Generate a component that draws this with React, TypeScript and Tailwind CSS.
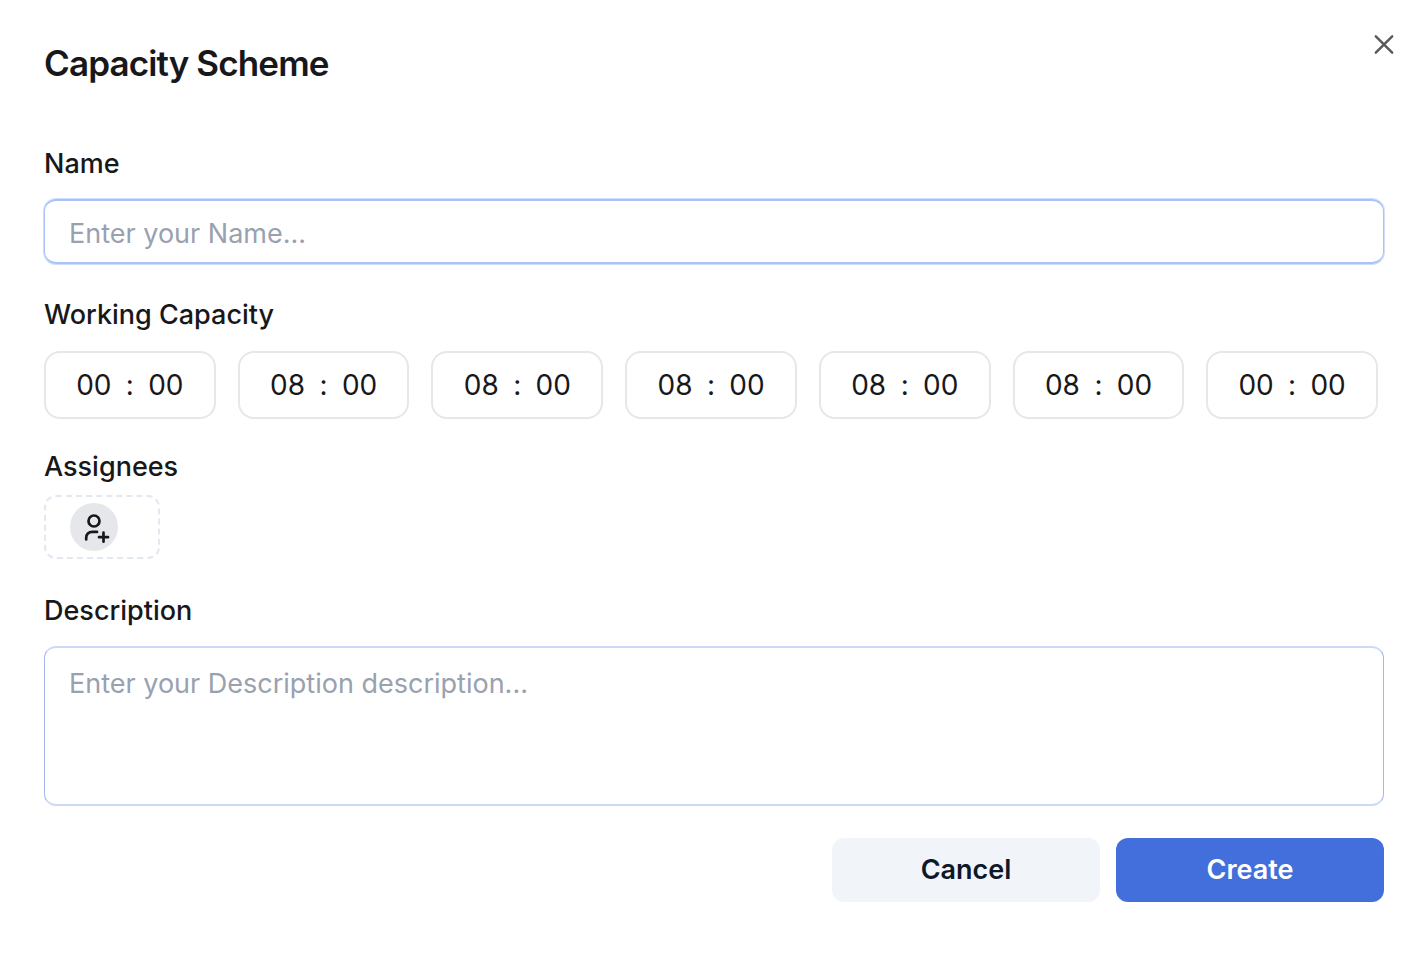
import { useState } from "react";

const DAYS = [
  { day: "Sunday", hours: "00", minutes: "00" },
  { day: "Monday", hours: "08", minutes: "00" },
  { day: "Tuesday", hours: "08", minutes: "00" },
  { day: "Wednesday", hours: "08", minutes: "00" },
  { day: "Thursday", hours: "08", minutes: "00" },
  { day: "Friday", hours: "08", minutes: "00" },
  { day: "Saturday", hours: "00", minutes: "00" },
];

const labelClass = "block text-[27px] leading-10 font-medium";

function CloseIcon() {
  return (
    <svg className="size-6" viewBox="0 0 24 24" fill="none" stroke="currentColor" strokeWidth="2.4" strokeLinecap="round">
      <path d="M3.8 4.3 20.2 20.7M20.2 4.3 3.8 20.7" />
    </svg>
  );
}

function AddUserIcon() {
  return (
    <svg className="size-12" viewBox="0 0 48 48" fill="none" stroke="currentColor" strokeWidth="2.7" strokeLinecap="round">
      <circle cx="24" cy="18" r="5.5" />
      <path d="M16.2 36.4v-1.6c0-3.4 2.4-5.9 6-5.9h4.8" />
      <path d="M33.5 29.7v9M29 34.2h9" />
    </svg>
  );
}

function TimeField({ day, hours, minutes }: { day: string; hours: string; minutes: string }) {
  const [h, setH] = useState(hours);
  const [m, setM] = useState(minutes);

  return (
    <div className="flex h-[68px] min-w-0 items-center justify-center rounded-2xl border-2 border-gray-200 text-[28px]">
      <input
        aria-label={`${day} hours`}
        className="w-14 min-w-0 bg-transparent text-center outline-none"
        maxLength={2}
        value={h}
        onChange={(e) => setH(e.target.value)}
      />
      <span className="w-4 text-center">:</span>
      <input
        aria-label={`${day} minutes`}
        className="w-14 min-w-0 bg-transparent text-center outline-none"
        maxLength={2}
        value={m}
        onChange={(e) => setM(e.target.value)}
      />
    </div>
  );
}

export default function App() {
  return (
    <div className="relative min-h-screen bg-white px-11 pt-[43px] pb-[72px] font-['Inter',sans-serif] text-[#18181b]">
      <button type="button" aria-label="Close" className="absolute top-8 right-[30px] text-[#5a5a5a]">
        <CloseIcon />
      </button>

      <h1 className="text-[35px] leading-10 font-semibold tracking-tight">Capacity Scheme</h1>

      <form className="mt-[61px] mr-[-2px]" onSubmit={(e) => e.preventDefault()}>
        <label htmlFor="name" className={labelClass}>Name</label>
        <input
          id="name"
          placeholder="Enter your Name..."
          className="mt-[15px] block h-[65px] w-full rounded-xl border-x border-y-2 border-[#a9c2f7] px-6 pt-1 text-[27px] ring-1 ring-[#cfdffb] outline-none placeholder:text-gray-400"
        />

        <div role="group" aria-labelledby="capacity" className="mt-[31px]">
          <h2 id="capacity" className={labelClass}>Working Capacity</h2>
          <div className="mt-4 mr-1.5 grid grid-cols-7 gap-[22px]">
            {DAYS.map((d) => (
              <TimeField key={d.day} {...d} />
            ))}
          </div>
        </div>

        <div className="mt-7">
          <h2 className={labelClass}>Assignees</h2>
          <button
            type="button"
            aria-label="Add assignee"
            className="mt-2 flex h-16 w-[116px] items-center rounded-xl border-2 border-dashed border-slate-200 pl-6"
          >
            <span className="rounded-full bg-gray-200">
              <AddUserIcon />
            </span>
          </button>
        </div>

        <label htmlFor="description" className={`${labelClass} mt-8`}>Description</label>
        <textarea
          id="description"
          placeholder="Enter your Description description..."
          className="mt-[15px] block h-40 w-full resize-none rounded-xl border-x border-y-2 border-x-[#a3b9ee] border-y-[#cddaf7] px-6 py-4 text-[27px] leading-10 outline-none placeholder:text-gray-400"
        />

        <div className="mt-8 flex justify-end gap-4">
          <button type="button" className="h-16 w-[268px] rounded-xl bg-[#f1f5fa] text-[27px] font-semibold text-slate-900">
            Cancel
          </button>
          <button type="submit" className="h-16 w-[268px] rounded-xl bg-[#426fdb] text-[27px] font-semibold text-white">
            Create
          </button>
        </div>
      </form>
    </div>
  );
}
